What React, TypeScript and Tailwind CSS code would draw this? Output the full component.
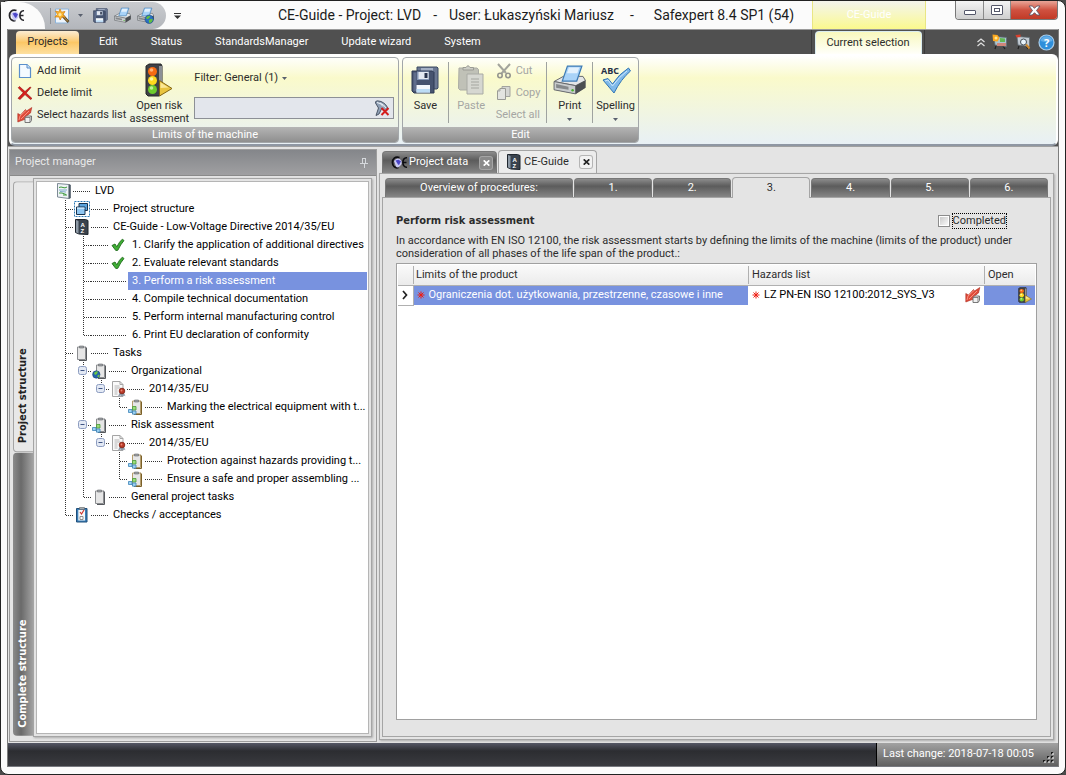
import type { ReactNode } from 'react'

type Guide = 'I' | 'T' | 'L' | 'H' | ' ' | '+T' | '+L'

type Node = {
  label: string
  guides: Guide[]
  icon?: ReactNode
  selected?: boolean
  step?: boolean
}

const MENU = ['Edit', 'Status', 'StandardsManager', 'Update wizard', 'System']

const STEPS = ['1.', '2.', '3.', '4.', '5.', '6.']

const TREE: Node[] = [
  { label: 'LVD', guides: [], icon: <ProjectIcon /> },
  { label: 'Project structure', guides: ['T'], icon: <StructureIcon /> },
  { label: 'CE-Guide - Low-Voltage Directive 2014/35/EU', guides: ['T'], icon: <BookIcon /> },
  { label: '1. Clarify the application of additional directives', guides: ['I', 'T', 'H'], icon: <CheckIcon />, step: true },
  { label: '2. Evaluate relevant standards', guides: ['I', 'T', 'H'], icon: <CheckIcon />, step: true },
  { label: '3. Perform a risk assessment', guides: ['I', 'T', 'H', 'H'], selected: true, step: true },
  { label: '4. Compile technical documentation', guides: ['I', 'T', 'H', 'H'], step: true },
  { label: '5. Perform internal manufacturing control', guides: ['I', 'T', 'H', 'H'], step: true },
  { label: '6. Print EU declaration of conformity', guides: ['I', 'L', 'H', 'H'], step: true },
  { label: 'Tasks', guides: ['T'], icon: <ClipIcon /> },
  { label: 'Organizational', guides: ['I', '+T'], icon: <ClipIcon badge="globe" /> },
  { label: '2014/35/EU', guides: ['I', 'I', '+L'], icon: <CertificateIcon /> },
  { label: 'Marking the electrical equipment with t...', guides: ['I', 'I', ' ', 'L'], icon: <ClipIcon badge="cubes" brown /> },
  { label: 'Risk assessment', guides: ['I', '+T'], icon: <ClipIcon badge="cubes" /> },
  { label: '2014/35/EU', guides: ['I', 'I', '+L'], icon: <CertificateIcon /> },
  { label: 'Protection against hazards providing t...', guides: ['I', 'I', ' ', 'T'], icon: <ClipIcon badge="cubes" brown /> },
  { label: 'Ensure a safe and proper assembling ...', guides: ['I', 'I', ' ', 'L'], icon: <ClipIcon badge="cubes" brown /> },
  { label: 'General project tasks', guides: ['I', 'L'], icon: <ClipIcon /> },
  { label: 'Checks / acceptances', guides: ['L'], icon: <ChecklistIcon /> },
]

/* ---------- icons ---------- */

function LogoIcon({ dark }: { dark?: boolean }) {
  const ink = dark ? '#0c0c10' : '#26262b'
  return (
    <svg width="17" height="13" viewBox="0 0 17 13" fill="none">
      <path d="M8.500 1.500C4 0 1.500 3 1.500 6.500S4 12.500 7.500 11.500" stroke={ink} strokeWidth="1.800" />
      <path d="M3 5q1.500-2.500 4-2.500T10.500 5 9 10 5 10.500z" fill="#c9c9f4" />
      <path d="M4.500 4.500l3-.8 2.500 1.500L8 9 7 8.500z" fill="#4b45c8" />
      <path d="M16 1.800c-5.500-.8-5.500 10 0 9.400M11.500 6.500h4" stroke={ink} strokeWidth="1.600" />
    </svg>
  )
}

function WandIcon() {
  return (
    <svg width="16" height="16" viewBox="0 0 16 16">
      <path d="M1.500 1h13v14h-13z" fill="#eef5fc" stroke="#8cb4dc" />
      <path d="M8 7l6.500 7" stroke="#5b4420" strokeWidth="2.600" />
      <path d="M8 7l6 6.500" stroke="#c2a25a" strokeWidth="1" />
      <path d="M6 1l1.400 3.200 3.600-.7-2 3 2.300 2.700-3.500-.4L6.200 12 5 8.900.8 9l2.700-2.600L1.500 3l3.300 1z" fill="#fbb934" stroke="#d98412" strokeWidth=".8" />
      <circle cx="6" cy="6.500" r="1.500" fill="#ffe9a3" />
    </svg>
  )
}

function DisksIcon({ size = 15 }: { size?: number }) {
  return (
    <svg width={size} height={size} viewBox="0 0 28 28">
      <path d="M6 1h20l1 1v20l-1 1H6z" fill="#6b7893" stroke="#3d4a63" />
      <path d="M10 2h12v3H10z" fill="#a4b0c5" />
      <path d="M1 5h20.500L23 6.500V27H3l-2-2z" fill="#46536f" stroke="#2e3a54" />
      <path d="M2.500 6.500h3V25h-3z" fill="#5f6d8b" />
      <path d="M6 5.500h12V14H6z" fill="#8496b4" />
      <path d="M7.500 6h10v7h-10z" fill="#e4e9f1" />
      <path d="M13.500 7h3v5h-3z" fill="#27324b" />
      <path d="M5.500 19h13.500v7.500H5.500z" fill="#f4f8fc" />
      <path d="M5.500 23h13.500v3.500H5.500z" fill="#bcdcf5" />
    </svg>
  )
}

function PrinterIcon({ size = 17, globe = false }: { size?: number; globe?: boolean }) {
  return (
    <svg width={size} height={size} viewBox="0 0 32 32">
      <path d="M1 17l9-5h19l2.500 4v7L22 29 1 25z" fill="#75787c" />
      <path d="M1 17l9-5h19l2.500 4L22 21z" fill="#e4e6e7" stroke="#64676b" strokeWidth=".9" />
      <path d="M1 17l21 4v8L1 25z" fill="#c9ccce" stroke="#64676b" strokeWidth=".9" />
      <path d="M22 21l9.500-5v7L22 29z" fill="#4c4f52" />
      <path d="M14 2h14l-5 14.500H9z" fill="#a9d3f8" stroke="#3f7cb5" strokeWidth="1.200" />
      <path d="M15.500 3.500h10l-2 5.500h-10z" fill="#e3f1fd" />
      <path d="M3 19.500l12 2.500v3L3 23z" fill="#85888b" />
      <circle cx="19" cy="25.500" r="1.200" fill="#48b32a" />
      {globe && (
        <>
          <circle cx="23" cy="23" r="8" fill="#2a6fc0" stroke="#154178" />
          <path d="M17 20q4-5 8-3l-2 4-4 2zM22 25l5-3 3 2-3 5-4 1z" fill="#63c03d" />
        </>
      )}
    </svg>
  )
}

function PageIcon() {
  return (
    <svg width="14" height="16" viewBox="0 0 14 16">
      <path d="M1.500 1.500h7.500l3.500 3.500v9.500h-11z" fill="#f4faff" stroke="#5b8fcb" strokeWidth="1.200" />
      <path d="M9 1.500V5h3.500" fill="#cfe3f7" stroke="#5b8fcb" />
    </svg>
  )
}

function DeleteIcon() {
  return (
    <svg width="16" height="16" viewBox="0 0 16 16">
      <path d="M2.500 1.500l5.500 5 5-4.500 1 .5-4.800 5.500L15 13.500l-1.500 1L8 9.600 3 14.500l-2-1.200 5.200-5.500L1.200 2.800z" fill="#d8201c" stroke="#8f1010" strokeWidth=".6" />
    </svg>
  )
}

function HazardIcon() {
  return (
    <svg width="16" height="16" viewBox="0 0 16 16">
      <path d="M.8 15V6.500L3.500 8 8.500 2.500l1 1.500L14.800.5 13.500 6 9.500 9l1.500 2.500-5 1.500z" fill="#df4a38" stroke="#ad2e22" strokeWidth=".6" />
      <path d="M2 13l1-4 6-5.500M4 12l8-8" stroke="#f8988a" fill="none" strokeWidth=".9" />
      <path d="M8 10.500l1.500-1.500h5v4.500L13 15.500H8z" fill="#efefef" stroke="#6b6b6b" strokeWidth=".9" />
      <path d="M8 10.500h5v5M13 10.500l1.500-1.500" fill="none" stroke="#6b6b6b" strokeWidth=".8" />
    </svg>
  )
}

function TrafficIcon({ small = false }: { small?: boolean }) {
  return (
    <svg width={small ? 14 : 28} height={small ? 16 : 34} viewBox="0 0 28 34" preserveAspectRatio="none">
      <path d="M1 3l3-2h12l1 2v28l-3 2H3l-2-2z" fill="#3f4145" stroke="#26272a" />
      <path d="M14 3h3v28l-3 2z" fill="#8d9095" />
      <circle cx="7.500" cy="8.500" r="4.500" fill="#f76b12" />
      <circle cx="7.500" cy="17.500" r="4.500" fill="#ffd91e" />
      <circle cx="7.500" cy="26.500" r="4.500" fill="#6dcb2c" />
      <circle cx="6.500" cy="7" r="1.800" fill="#ffb478" />
      <circle cx="6.500" cy="16" r="1.800" fill="#fff5a0" />
      <circle cx="6.500" cy="25" r="1.800" fill="#c0f095" />
      <path d="M14.500 17.500L27 25.500 14.500 33z" fill="#e9c440" stroke="#836414" />
      <path d="M15.500 19.500l8 5-8 .5z" fill="#fbe795" />
    </svg>
  )
}

function FilterClearIcon() {
  return (
    <svg width="16" height="16" viewBox="0 0 16 16">
      <path d="M1.500 3Q1 1 3.500.8L7 1.500Q13 4 14 9.500L11 11 8 8l-3 6-3 1.500L4.500 8z" fill="#8fa0b6" stroke="#3f4a5a" strokeWidth=".9" />
      <path d="M3 2.500q4 .5 6 4M6 3q4 1.500 6 5" stroke="#f0f4f9" fill="none" />
      <path d="M7.500 8l7 7M14.500 8l-7 7" stroke="#d41c1c" strokeWidth="2" />
    </svg>
  )
}

function PasteIcon() {
  return (
    <svg width="28" height="32" viewBox="0 0 28 32">
      <path d="M2 4h18l1.500 1.500V26H3l-1.500-1.500z" fill="#c0c1b7" stroke="#abaca4" />
      <path d="M6 6V3.500h3q2-3.500 4 0h3.500V6z" fill="#cdcec6" stroke="#9b9c95" />
      <path d="M10 10h16v20H10z" fill="#d6d7d1" stroke="#a9aaa4" />
      <path d="M14 15h8M14 18h8M14 21h8M14 24h8" stroke="#a5a6a0" />
    </svg>
  )
}

function CutIcon() {
  return (
    <svg width="16" height="16" viewBox="0 0 16 16" fill="none">
      <path d="M2 1l8 9M14 1L5.500 10.500" stroke="#a3a49c" strokeWidth="2" />
      <circle cx="4" cy="12.500" r="2.200" stroke="#95968f" strokeWidth="1.600" />
      <circle cx="12" cy="12.500" r="2.200" stroke="#95968f" strokeWidth="1.600" />
    </svg>
  )
}

function CopyIcon() {
  return (
    <svg width="16" height="16" viewBox="0 0 16 16">
      <path d="M6 1.500h8v10H6z" fill="#d5d6d2" stroke="#a3a49f" />
      <path d="M1.500 6L4 3.500h5.500v11h-8z" fill="#e3e4e0" stroke="#9a9b96" />
      <path d="M1.500 6H4V3.500" fill="none" stroke="#9a9b96" strokeWidth=".8" />
    </svg>
  )
}

function SpellingIcon() {
  return (
    <svg width="34" height="32" viewBox="0 0 34 32">
      <text x="2" y="10" fontSize="9" fontWeight="700" fontFamily="Open Sans, sans-serif" fill="#253047">
        ABC
      </text>
      <path d="M4 16l5-1.500 4.500 5.500Q20 10 29.500 4l2 3Q22 15 15 29z" fill="#7fb9ea" stroke="#3275b4" />
      <path d="M6 17l3-1 4.500 6Q20 13 28 7" fill="none" stroke="#cfe8fb" />
    </svg>
  )
}

function ProjectIcon() {
  return (
    <svg width="16" height="16" viewBox="0 0 16 16">
      <path d="M1.500.5L13 1.500v14L1.500 14z" fill="#eef3f6" stroke="#7d8a95" />
      <path d="M13 1.500l1.500.5v13l-1.500.5z" fill="#4d5a66" stroke="#4d5a66" strokeWidth=".6" />
      <path d="M3 4.500q2-1 4 0t4-.5M3 10h3l4 1.500M7 12h4" stroke="#3c9a3a" fill="none" />
      <path d="M3 7h8M4 8.500l6 .5" stroke="#7fa9cc" />
    </svg>
  )
}

function StructureIcon() {
  return (
    <svg width="16" height="16" viewBox="0 0 16 16">
      <path d="M.5.5h15v15H.5z" fill="#fff" stroke="#2b78b4" strokeDasharray="2 1" />
      <path d="M5 2.500h8.500v7H5z" fill="#5aa3dc" stroke="#16324e" />
      <path d="M2.500 6H11v7.500H2.500z" fill="#8fc6f1" stroke="#16324e" />
      <path d="M3 6.500h7.500v1.500H3z" fill="#c6e4fb" />
    </svg>
  )
}

function BookIcon() {
  return (
    <svg width="16" height="16" viewBox="0 0 16 16">
      <path d="M1.500.5h10l2.500 1V15.500l-9-.5-3.500-1.500z" fill="#39424d" stroke="#1f262e" />
      <path d="M2 1l2.500 1V14.500L2 13.300z" fill="#8e9aa6" />
      <text x="6.500" y="7.500" fontSize="6" fontWeight="700" fontFamily="Liberation Sans, sans-serif" fill="#fff">A</text>
      <text x="6.500" y="13.500" fontSize="6" fontWeight="700" fontFamily="Liberation Sans, sans-serif" fill="#fff">Z</text>
    </svg>
  )
}

function CheckIcon() {
  return (
    <svg width="14" height="14" viewBox="0 0 14 14">
      <path d="M1 7.500L4 6l1.800 2.800Q8.500 3.500 11.300 1.200L13 2.500Q9.500 6.500 6.800 12.300L4.800 12.500z" fill="#3fae35" stroke="#1f6b1b" strokeWidth=".9" />
    </svg>
  )
}

function ClipIcon({ badge, brown }: { badge?: 'globe' | 'cubes'; brown?: boolean }) {
  return (
    <svg width="16" height="16" viewBox="0 0 16 16">
      <path d={badge ? 'M4.500 2h8v12.500h-8z' : 'M3.500 2h8v12.500h-8z'} fill="#e6e6e6" stroke={brown ? '#b39c6c' : '#8b8d90'} />
      <path d={badge ? 'M12.500 2l1 .8v12.700H6' : 'M11.500 2l1 .8v12.700H5'} fill="none" stroke={brown ? '#7a6028' : '#55585c'} />
      <path d={badge ? 'M6.500 1h4v2h-4z' : 'M5.500 1h4v2h-4z'} fill="#9ea2a6" stroke="#66696d" strokeWidth=".6" />
      {badge === 'globe' && (
        <>
          <circle cx="4.300" cy="11.500" r="3.700" fill="#2565ae" stroke="#174376" strokeWidth=".6" />
          <path d="M2 10q2-2.500 4-1.500L5 11l-2 1zM5 13l2-1.500.8.800L6.500 14.500z" fill="#6cc644" />
        </>
      )}
      {badge === 'cubes' && (
        <>
          <path d="M4.500 7.500H8V11H4.500z" fill="#9bdc7c" stroke="#4a9a35" strokeWidth=".8" />
          <path d="M.5 10.500h3.500v3H.5zM4.500 12h3.500v3.200H4.500z" fill="#9ed3f2" stroke="#3e83b8" strokeWidth=".8" />
        </>
      )}
    </svg>
  )
}

function CertificateIcon() {
  return (
    <svg width="16" height="16" viewBox="0 0 16 16">
      <path d="M2.500.5H10L13 3.500v12H2.500z" fill="#fafafa" stroke="#a5a5a5" />
      <path d="M10 .5v3h3" fill="none" stroke="#a5a5a5" />
      <path d="M4.500 5h5M4.500 7h6M4.500 9h3M4.500 11h3M4.500 13h3" stroke="#b5b5b5" />
      <path d="M9.500 12L8 15.500l2.500-1 1.500 1 2-1 1.500.8-1.500-3.300z" fill="#8e9aa8" />
      <circle cx="12" cy="10" r="2.800" fill="#b93a28" stroke="#7d2012" strokeWidth=".8" />
      <circle cx="11.500" cy="9.500" r=".9" fill="#e98b78" />
    </svg>
  )
}

function ChecklistIcon() {
  return (
    <svg width="16" height="16" viewBox="0 0 16 16">
      <path d="M2.500 1.500H13v13.500H2.500z" fill="#3b7fb8" stroke="#1f4e7a" />
      <path d="M4.300 3h6.700v10.500H4.300z" fill="#f5f8fa" />
      <path d="M5.500.5h5v2h-5z" fill="#a4a9ad" stroke="#5f6468" strokeWidth=".6" />
      <path d="M6 5l1.500 2L10 3" fill="none" stroke="#d0342c" strokeWidth="1.200" />
      <path d="M6 9.500h3v3H6z" fill="#fff" stroke="#777" strokeWidth=".8" />
    </svg>
  )
}

function HelpIcon() {
  return (
    <svg width="17" height="17" viewBox="0 0 17 17">
      <circle cx="8.500" cy="8.500" r="7.500" fill="#2f8fdb" stroke="#a9cdea" strokeWidth="1.200" />
      <path d="M2.500 7a6.200 6.200 0 0 1 12 0q-6 2-12 0z" fill="#63aee8" />
      <text x="8.500" y="12.500" textAnchor="middle" fontSize="11" fontWeight="700" fontFamily="Open Sans, sans-serif" fill="#fff">?</text>
    </svg>
  )
}

function BoardIcon({ search = false }: { search?: boolean }) {
  return (
    <svg width="16" height="16" viewBox="0 0 16 16">
      <path d="M4 12l-1 3M11 12l2 3" stroke="#222" strokeWidth="1.200" />
      <path d="M2 2.500l12.500 1v9L3 11z" fill={search ? '#c3cbd3' : '#a9c6d2'} stroke="#5d6a73" strokeWidth=".7" />
      {search ? (
        <>
          <path d="M.5 1l5-.5v2.500l-4 .5z" fill="#d8402d" />
          <circle cx="8.500" cy="8" r="3" fill="#e9f4fb" stroke="#444f58" />
          <path d="M11 10.500l3.500 4" stroke="#c9862c" strokeWidth="2" />
        </>
      ) : (
        <>
          <path d="M5 9h9v3H5z" fill="#d0877a" />
          <path d="M8 4l5 .5v3.500H8z" fill="#62b854" />
          <path d="M.5.5l5 .5 2 3-2 3.500-4.500-.5z" fill="#fba71d" />
          <circle cx="4" cy="4" r="1.500" fill="#ffe58f" />
        </>
      )}
    </svg>
  )
}

function Caret({ className = '' }: { className?: string }) {
  return (
    <svg width="5" height="3" viewBox="0 0 5 3" className={className}>
      <path d="M0 0h5L2.500 3z" fill="#59606e" />
    </svg>
  )
}

/* ---------- title bar and menu ---------- */

function TitleBar() {
  return (
    <header className="flex h-7 items-start">
      <div className="mt-px flex h-[27px] w-[165px] shrink-0 items-center rounded-r-full bg-linear-to-b from-[#c9cbcf] to-[#b3b6bb]">
        <div className="flex h-full w-11 items-center rounded-tr-[26px] bg-[#fbfbfb] pl-[7px]">
          <LogoIcon />
        </div>
        <span className="ml-[5px] h-4 w-px bg-[#8d9096]" />
        <button type="button" aria-label="Wizard" className="ml-[3px]"><WandIcon /></button>
        <button type="button" aria-label="More wizards" className="ml-2"><Caret /></button>
        <button type="button" aria-label="Save all" className="ml-2.5"><DisksIcon /></button>
        <button type="button" aria-label="Print" className="ml-1.5"><PrinterIcon /></button>
        <button type="button" aria-label="Print online" className="ml-1.5"><PrinterIcon globe /></button>
      </div>
      <button type="button" aria-label="Customize toolbar" className="mt-3 ml-2">
        <svg width="7" height="6" viewBox="0 0 7 6">
          <path d="M0 0h7v1H0zM0 2.500h7L3.500 6z" fill="#333" />
        </svg>
      </button>
      <h1 className="ml-[97px] flex h-7 items-center text-sm whitespace-nowrap text-[#1b1b1b]">
        <span>CE-Guide - Project: LVD</span>
        <span className="ml-3">-</span>
        <span className="ml-3">User: Łukaszyński Mariusz</span>
        <span className="ml-4">-</span>
        <span className="ml-5">Safexpert 8.4 SP1 (54)</span>
      </h1>
      <div className="mr-[29px] ml-auto flex h-7 w-[114px] items-center justify-center border-x border-[#e9e684] bg-linear-to-b from-[#f4f4ec] to-[#fbf98c] text-white">
        CE-Guide
      </div>
      <div className="mr-[7px] flex h-[19px] overflow-hidden rounded-b border border-t-0 border-[#777]">
        <button type="button" aria-label="Minimize" className="flex w-7 items-center justify-center border-r border-[#8a8a8a] bg-linear-to-b from-[#f4f4f4] to-[#cfcfcf]">
          <span className="mt-1 h-[5px] w-3 rounded-[1px] border border-[#55586a] bg-white" />
        </button>
        <button type="button" aria-label="Maximize" className="flex w-[27px] items-center justify-center border-r border-[#8a8a8a] bg-linear-to-b from-[#f4f4f4] to-[#cfcfcf]">
          <span className="flex h-[10px] w-3 items-center justify-center rounded-[1px] border border-[#55586a] bg-white">
            <span className="h-1 w-1.5 border border-[#55586a]" />
          </span>
        </button>
        <button type="button" aria-label="Close" className="flex w-[46px] items-center justify-center bg-linear-to-b from-[#e8a598] via-[#cf5140] to-[#c23a26]">
          <svg width="13" height="11" viewBox="0 0 13 11">
            <path d="M1 1h3.200L6.500 3.300 8.800 1H12L8.500 5.500 12 10H8.800L6.500 7.700 4.200 10H1l3.500-4.500z" fill="#fff" stroke="#5d5664" strokeWidth=".9" />
          </svg>
        </button>
      </div>
    </header>
  )
}

function MenuBar() {
  return (
    <nav className="flex h-[25px] items-end border-t border-[#9b9b9b] bg-[#505050] pl-2 text-white">
      <a href="#projects" className="mr-1 flex h-[23px] w-[63px] items-center justify-center rounded-t bg-linear-to-b from-[#fbecd2] via-[#fbc765] to-[#fde0a0] text-[#2c2c2c]">
        Projects
      </a>
      {MENU.map((m) => (
        <a key={m} href="#menu" className="mr-px flex h-[23px] items-center px-4">
          {m}
        </a>
      ))}
      <div className="mr-7 ml-auto flex h-6 w-[114px] items-end justify-center border-x border-[#3a3a3a]">
        <a href="#selection" className="flex h-[23px] w-[107px] items-center justify-center rounded-t border border-b-0 border-[#d9ecf0] bg-linear-to-b from-[#f8f8bd] to-[#fffffa] text-[#2c2c2c]">
          Current selection
        </a>
      </div>
      <div className="flex h-6 w-[105px] items-center justify-between pr-[3px] pl-6">
        <button type="button" aria-label="Collapse ribbon">
          <svg width="8" height="9" viewBox="0 0 8 9" fill="none" stroke="#ddd" strokeWidth="1.300">
            <path d="M.5 4L4 1l3.500 3M.5 8L4 5l3.500 3" />
          </svg>
        </button>
        <button type="button" aria-label="Board"><BoardIcon /></button>
        <button type="button" aria-label="Search board"><BoardIcon search /></button>
        <button type="button" aria-label="Help"><HelpIcon /></button>
      </div>
    </nav>
  )
}

/* ---------- ribbon ---------- */

function Group({ title, className, children }: { title: string; className: string; children: ReactNode }) {
  return (
    <section className={`flex h-[86px] flex-col overflow-hidden rounded border border-[#a3a7aa] ${className}`}>
      <div className="flex flex-1">{children}</div>
      <h2 className="h-[15px] bg-linear-to-b from-[#b4b4b4] to-[#8f8f8f] text-center leading-4 text-white">{title}</h2>
    </section>
  )
}

function SmallButton({ icon, label, disabled }: { icon?: ReactNode; label: string; disabled?: boolean }) {
  return (
    <button type="button" disabled={disabled} className="flex h-[22px] items-center gap-1 whitespace-nowrap disabled:text-[#a5a6a3]">
      {icon && <span className="flex w-4 justify-center">{icon}</span>}
      {label}
    </button>
  )
}

function LargeButton({ icon, label, disabled, caret }: { icon: ReactNode; label: string; disabled?: boolean; caret?: boolean }) {
  return (
    <button type="button" disabled={disabled} className="flex w-[45px] flex-col items-center pt-1 disabled:text-[#a5a6a3]">
      <span className="flex h-9 items-center justify-center">{icon}</span>
      <span className="leading-4">{label}</span>
      {caret && <Caret className="mt-1" />}
    </button>
  )
}

function Separator() {
  return <span className="my-1 w-px bg-[#9fa3a0]" />
}

function Ribbon() {
  return (
    <div className="bg-[#505050]">
      <div className="ml-px flex h-[92px] gap-[3px] rounded-md border-2 border-white border-b-[#8f97a3] bg-linear-to-b from-white via-[#fafacb] via-25% to-[#e8f0f5] pt-px">
        <Group title="Limits of the machine" className="w-[388px]">
          <div className="flex flex-col pt-0.5 pl-[5px]">
            <SmallButton icon={<PageIcon />} label="Add limit" />
            <SmallButton icon={<DeleteIcon />} label="Delete limit" />
            <SmallButton icon={<HazardIcon />} label="Select hazards list" />
          </div>
          <button type="button" className="ml-1 flex w-[58px] flex-col items-center pt-[5px] leading-[13px]">
            <TrafficIcon />
            <span className="mt-0.5">Open risk assessment</span>
          </button>
          <div className="mr-1 ml-1.5 flex-1 pt-[11px]">
            <button type="button" className="flex h-[18px] items-center gap-1">
              Filter: General (1)
              <Caret />
            </button>
            <div className="mt-2.5 flex h-[22px] items-center border border-[#8d9096] bg-[#e3e6ec] pr-[3px]">
              <input aria-label="Filter" className="h-full w-full px-1 outline-none" />
              <button type="button" aria-label="Clear filter"><FilterClearIcon /></button>
            </div>
          </div>
        </Group>
        <Group title="Edit" className="w-[237px]">
          <LargeButton icon={<DisksIcon size={28} />} label="Save" />
          <Separator />
          <LargeButton icon={<PasteIcon />} label="Paste" disabled />
          <div className="flex w-[53px] flex-col pt-0.5 pl-0.5">
            <SmallButton icon={<CutIcon />} label="Cut" disabled />
            <SmallButton icon={<CopyIcon />} label="Copy" disabled />
            <SmallButton label="Select all" disabled />
          </div>
          <Separator />
          <LargeButton icon={<PrinterIcon size={33} />} label="Print" caret />
          <Separator />
          <LargeButton icon={<SpellingIcon />} label="Spelling" caret />
        </Group>
      </div>
    </div>
  )
}

/* ---------- project manager ---------- */

const PATHS: Record<string, string> = {
  I: 'M10.500 0V18',
  T: 'M10.500 0V18M11 9.500H18',
  L: 'M10.500 0V10M11 9.500H18',
  H: 'M0 9.500H18',
  ' ': '',
}

function GuideCell({ type }: { type: Guide }) {
  const line = (
    <svg width="18" height="18" viewBox="0 0 18 18" className="shrink-0" fill="none">
      <path d={PATHS[type.replace('+', '')]} stroke="#333" strokeDasharray="1 1" />
      {type.startsWith('+') && (
        <>
          <rect x="5.500" y="4.500" width="8" height="8" rx="2" fill="#e3e9f4" stroke="#8c9cc0" />
          <path d="M7.500 8.500h4" stroke="#3f5484" />
        </>
      )}
    </svg>
  )
  if (!type.startsWith('+')) return line
  return <button type="button" aria-label="Collapse">{line}</button>
}

function TreeRow({ node }: { node: Node }) {
  return (
    <li className="flex h-[18px] items-center whitespace-nowrap">
      {node.guides.map((g, i) => (
        <GuideCell key={i} type={g} />
      ))}
      {node.icon && <span className="flex w-[18px] shrink-0 justify-center">{node.icon}</span>}
      {!node.step && <GuideCell type="H" />}
      <span className={`ml-px flex h-full flex-1 items-center ${node.step ? 'pl-1' : 'pl-[3px]'} ${node.selected ? 'bg-[#7892df] text-white' : 'text-black'}`}>
        {node.label}
      </span>
    </li>
  )
}

function ProjectManager() {
  return (
    <aside className="flex w-[368px] shrink-0 flex-col border border-[#9d9d9d]">
      <div className="flex h-[26px] items-center justify-between border-b border-[#8a8a8a] bg-linear-to-b from-[#84868a] to-[#a0a0a2] pr-2 pl-[5px] text-[#e9e9e9]">
        <h2>Project manager</h2>
        <button type="button" aria-label="Pin">
          <svg width="8" height="10" viewBox="0 0 8 10" fill="none" stroke="#d5d8dc">
            <path d="M2.500 0v5.500M5.500 0v5.500M2 .5h4M0 5.500h8M4.500 6v4" />
          </svg>
        </button>
      </div>
      <div className="flex flex-1 pt-0.5 pr-1 pb-1 pl-[3px]">
        <div className="flex w-5 flex-col gap-px pt-[3px] pb-px font-['DejaVu_Sans_Condensed','DejaVu_Sans',sans-serif] font-bold">
          <button type="button" className="flex w-full flex-[270] rotate-180 items-center justify-start rounded-r border border-l-0 border-[#a5a5a5] bg-[#e8e8e8] pt-2 text-[#222] [writing-mode:vertical-rl]">
            Project structure
          </button>
          <button type="button" className="flex w-full flex-[284] rotate-180 items-center justify-start rounded-r bg-linear-to-l from-[#8b8b8b] via-[#6a6a6a] via-40% to-[#a2a2a2] pt-2 text-white [writing-mode:vertical-rl]">
            Complete structure
          </button>
        </div>
        <div className="flex flex-1 border border-[#a5a5a5] p-0.5 shadow-[1px_1px_2px_#aaa]">
          <ul className="flex-1 border border-[#b5b5b5] bg-white pr-px pl-[18px]">
            {TREE.map((n, i) => (
              <TreeRow key={i} node={n} />
            ))}
          </ul>
        </div>
      </div>
    </aside>
  )
}

/* ---------- document area ---------- */

function CloseTab({ dark }: { dark?: boolean }) {
  return (
    <button
      type="button"
      aria-label="Close tab"
      className={`flex h-3 w-3 items-center justify-center rounded-[2px] ring-1 ${dark ? 'bg-[#8a8a8a] ring-[#a5a5a5]' : 'bg-[#f2f2f2] ring-[#b5b5b5]'}`}
    >
      <svg width="7" height="6" viewBox="0 0 7 6">
        <path d="M.7.300l5.600 5.400M6.300.300L.7 5.700" stroke={dark ? '#fff' : '#222'} strokeWidth="1.600" />
      </svg>
    </button>
  )
}

function Star() {
  return (
    <svg width="8" height="8" viewBox="0 0 8 8" className="shrink-0">
      <path d="M4 .5v7M.5 4h7M1.500 1.500l5 5M6.500 1.500l-5 5" stroke="#ee1c12" />
    </svg>
  )
}

const darkTab = 'bg-linear-to-b from-[#8c8c8c] via-[#5c5c5c] via-40% to-[#868686] text-white'

function LimitsTable() {
  return (
    <div className="flex-1 border border-[#a0a0a0] bg-white p-px">
      <table className="w-full table-fixed border-collapse text-left">
        <colgroup>
          <col className="w-[15px]" />
          <col />
          <col className="w-[236px]" />
          <col className="w-[51px]" />
        </colgroup>
        <thead>
          <tr className="h-5 bg-linear-to-b from-[#fafafa] to-[#ebebeb] text-[#2c2c2c] [&>th]:border-b [&>th]:border-[#b0b0b0] [&>th]:p-0 [&>th]:font-normal">
            <th />
            <th><div className="border-l border-[#b0b0b0] pl-0.5 leading-[18px]">Limits of the product</div></th>
            <th><div className="border-l border-[#b0b0b0] pl-[3px] leading-[18px]">Hazards list</div></th>
            <th><div className="border-l border-[#b0b0b0] pl-[3px] leading-[18px]">Open</div></th>
          </tr>
        </thead>
        <tbody>
          <tr className="h-5 [&>td]:p-0">
            <td className="border-r border-b border-[#b0b0b0]">
              <svg width="13" height="10" viewBox="0 0 13 10">
                <path d="M5 1l3.500 4L5 9" fill="none" stroke="#222" strokeWidth="1.700" />
              </svg>
            </td>
            <td className="bg-[#7892df] text-white">
              <div className="flex items-center gap-1 pl-[3px] whitespace-nowrap">
                <Star />
                Ograniczenia dot. użytkowania, przestrzenne, czasowe i inne
              </div>
            </td>
            <td className="text-black">
              <div className="flex items-center gap-1 pr-[3px] pl-1 whitespace-nowrap">
                <Star />
                LZ PN-EN ISO 12100:2012_SYS_V3
                <button type="button" aria-label="Select hazards list" className="ml-auto"><HazardIcon /></button>
              </div>
            </td>
            <td className="bg-[#7892df]">
              <button type="button" aria-label="Open risk assessment" className="mr-[3px] ml-auto block"><TrafficIcon small /></button>
            </td>
          </tr>
        </tbody>
      </table>
    </div>
  )
}

function Workspace() {
  return (
    <main className="mb-0.5 flex min-w-0 flex-1 flex-col">
      <div className="flex h-6 items-end gap-px pl-[3px]">
        <div className={`flex h-[22px] w-[115px] items-center rounded-t border border-b-0 border-[#777] pr-1 pl-2 ${darkTab}`}>
          <LogoIcon dark />
          <a href="#data" className="mr-auto ml-px">Project data</a>
          <CloseTab dark />
        </div>
        <div className="flex h-[23px] w-[99px] items-center rounded-t border border-b-0 border-[#a5a5a5] bg-[#ececec] pr-1 pl-[7px]">
          <BookIcon />
          <a href="#guide" className="mr-auto ml-0.5">CE-Guide</a>
          <CloseTab />
        </div>
      </div>
      <div className="flex flex-1 flex-col border border-[#a5a5a5] p-0.5 pt-[3px] shadow-[1px_1px_2px_#aaa]">
        <nav className="grid h-5 grid-cols-[188px_repeat(6,1fr)] items-end gap-px px-[3px] text-center">
          <a href="#overview" className={`h-[19px] rounded-t border border-b-0 border-[#777] leading-[18px] ${darkTab}`}>
            Overview of procedures:
          </a>
          {STEPS.map((s) => (
            <a
              key={s}
              href="#step"
              className={
                s === '3.'
                  ? 'z-10 -mb-px h-[21px] rounded-t border border-b-0 border-[#a5a5a5] bg-[#e4e4e4] leading-5'
                  : `h-[19px] rounded-t border border-b-0 border-[#777] leading-[18px] ${darkTab}`
              }
            >
              {s}
            </a>
          ))}
        </nav>
        <section className="flex flex-1 flex-col border border-[#a5a5a5] px-[13px] pt-3.5 pb-4">
          <div className="flex h-[18px] items-center justify-between pr-[30px]">
            <h2 className="font-['DejaVu_Sans_Condensed','DejaVu_Sans',sans-serif] font-bold">Perform risk assessment</h2>
            <div className="flex items-center gap-0.5">
              <input
                id="completed"
                type="checkbox"
                className="h-3 w-3 appearance-none border border-[#8c8c8c] bg-linear-to-br from-[#c4c4c4] to-white ring-1 ring-white ring-inset"
              />
              <label htmlFor="completed" className="border border-dotted border-black leading-[14px]">Completed</label>
            </div>
          </div>
          <p className="mt-1 mb-[3px] pr-5 leading-[13px]">
            In accordance with EN ISO 12100, the risk assessment starts by defining the limits of the machine (limits of the product) under
            consideration of all phases of the life span of the product.:
          </p>
          <LimitsTable />
        </section>
      </div>
    </main>
  )
}

function StatusBar() {
  return (
    <footer className="flex h-6 border-b border-[#77797f] bg-linear-to-b from-[#555866] via-[#2c2d31] via-35% to-[#3a3b40]">
      <div className="ml-auto flex w-[182px] items-center justify-between border-l border-black bg-linear-to-b from-[#a2a2a2] to-[#606060] pr-1 pl-1.5 text-white">
        Last change: 2018-07-18 00:05
        <svg width="11" height="11" viewBox="0 0 11 11" className="mt-1.5">
          <path d="M8 0h2v2H8zM4 4h2v2H4zM8 4h2v2H8zM0 8h2v2H0zM4 8h2v2H4zM8 8h2v2H8z" fill="#1c1c1c" />
          <path d="M9 1h2v2H9zM5 5h2v2H5zM9 5h2v2H9zM1 9h2v2H1zM5 9h2v2H5zM9 9h2v2H9z" fill="#ddd" fillOpacity=".7" />
        </svg>
      </div>
    </footer>
  )
}

export default function App() {
  return (
    <div className="flex min-h-screen flex-col bg-[#4a4a4a] font-['Roboto',sans-serif] text-[11px] text-[#2c2c2c]">
      <div className="flex flex-1 flex-col rounded-lg border border-[#222] bg-[#fbfbfb]">
        <TitleBar />
        <div className="mx-1.5 mb-[7px] flex flex-1 flex-col border-x border-[#7d7d7d] bg-[#e4e4e4]">
          <MenuBar />
          <Ribbon />
          <div className="flex flex-1 gap-0.5 border-t border-[#a0a0a0] pt-0.5 pr-1 pb-px pl-px">
            <ProjectManager />
            <Workspace />
          </div>
          <StatusBar />
        </div>
      </div>
    </div>
  )
}
